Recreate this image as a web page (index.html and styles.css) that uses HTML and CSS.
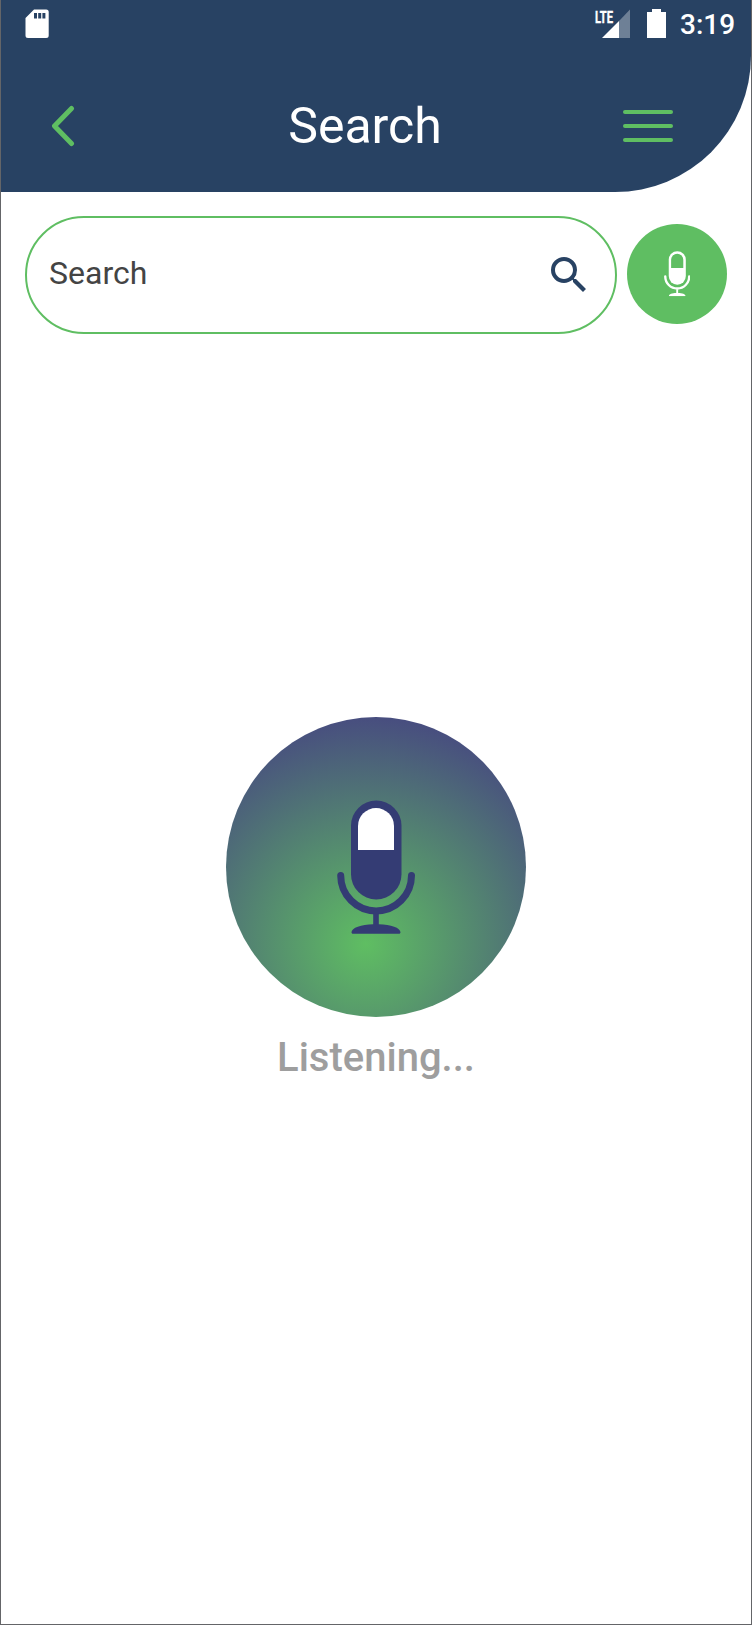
FILE: index.html
```
<!DOCTYPE html>
<html lang="en">
<head>
  <meta charset="UTF-8" />
  <title>Search</title>
  <meta name="viewport" content="width=device-width, initial-scale=1.0" />
  <link rel="stylesheet" href="styles.css">
</head>
<body>
  <!-- Shared microphone shape -->
  <svg class="defs" width="0" height="0" aria-hidden="true">
    <symbol id="mic" viewBox="111 83 78 134">
      <rect x="125" y="83.5" width="50.5" height="99" rx="25.2" fill="currentColor" />
      <path class="mic-window" d="M132 133V109a18 18 0 0 1 36 0v24z" />
      <path d="M114.7 158.5a35.4 35.4 0 0 0 70.8 0" fill="none" stroke="currentColor" stroke-width="7" stroke-linecap="round" />
      <path d="M147.2 196h5.6v11.3c12 .2 21.7 3.6 21.7 8 0 .9-.6 1.5-1.5 1.5h-46c-.9 0-1.5-.6-1.5-1.5 0-4.4 9.7-7.8 21.7-8z" fill="currentColor" />
    </symbol>
  </svg>

  <div class="screen">
    <header>
      <div class="status-bar">
        <svg class="sd-card" width="24" height="30" viewBox="0 0 24 30">
          <path fill="#fff" fill-rule="evenodd" d="M9 .5h12.2a2.5 2.5 0 0 1 2.5 2.5v23.5a2.5 2.5 0 0 1-2.5 2.5H3a2.500 2.500 0 0 1-2.500-2.500V9zM9 4v5.500h3V4zm4.200 0v5.500h3V4zm4.200 0v5.500h3V4z" />
        </svg>
        <div class="status-right">
          <svg class="signal" width="36" height="30" viewBox="0 0 36 30">
            <path fill="#fff" fill-opacity=".33" d="M24 12l11-11.5V29H24z" />
            <path fill="#fff" d="M7 29L24 12v17z" />
            <text class="lte" x="0" y="13.6" textLength="18" lengthAdjust="spacingAndGlyphs">LTE</text>
          </svg>
          <svg class="battery" width="19" height="29" viewBox="0 0 19 29">
            <path fill="#fff" d="M5 0h9v3h5v26H0V3h5z" />
          </svg>
          <span class="time">3:19</span>
        </div>
      </div>

      <div class="title-bar">
        <svg class="back" width="24" height="42" viewBox="0 0 24 42">
          <path d="M20.5 3.5L3.5 21l17 17.500" />
        </svg>
        <h1>Search</h1>
        <div class="menu">
          <span></span>
          <span></span>
          <span></span>
        </div>
      </div>
    </header>

    <div class="search-row">
      <div class="search-box">
        <span class="search-text">Search</span>
        <svg class="search-icon" width="48" height="48" viewBox="0 0 24 24">
          <path d="M15.5 14h-.79l-.28-.27A6.471 6.471 0 0 0 16 9.5 6.5 6.5 0 1 0 9.5 16c1.61 0 3.09-.59 4.23-1.57l.27.28v.79l5 4.99L20.49 19l-4.99-5zm-6 0C7.01 14 5 11.99 5 9.5S7.01 5 9.5 5 14 7.01 14 9.5 11.99 14 9.5 14z" />
        </svg>
      </div>
      <div class="mic-button">
        <svg width="26.4" height="45.3"><use href="#mic" /></svg>
      </div>
    </div>

    <main>
      <div class="listening-circle">
        <svg width="78" height="134"><use href="#mic" /></svg>
      </div>
      <p class="listening-text">Listening...</p>
    </main>
  </div>
</body>
</html>
```
FILE: styles.css
```
* {
  box-sizing: border-box;
}

body {
  margin: 0;
  font-family: Roboto, sans-serif;
  background: #fff;
}

.defs {
  display: block;
}

.screen {
  width: 752px;
  height: 1625px;
  border: 1px solid #646568;
  border-top: none;
  overflow: hidden;
}

/* Header */
header {
  height: 192px;
  background: #284263;
  border-bottom-right-radius: 136px;
}

.status-bar {
  display: flex;
  justify-content: space-between;
  align-items: flex-start;
  height: 60px;
  padding: 9px 16px 0 24px;
}

.status-right {
  display: flex;
  align-items: flex-start;
}

.signal {
  overflow: visible;
}

.battery {
  margin-left: 16px;
}

.lte {
  font-size: 17px;
  font-weight: 700;
  fill: #fff;
  stroke: #fff;
  stroke-width: 0.4;
}

.time {
  width: 55px;
  margin-left: 14px;
  color: #fff;
  font-size: 28px;
  font-weight: 500;
  line-height: 32px;
  white-space: nowrap;
}

.title-bar {
  display: flex;
  justify-content: space-between;
  align-items: center;
  height: 132px;
  padding: 0 78px 0 50px;
}

.back {
  fill: none;
  stroke: #5fbe62;
  stroke-width: 5;
  stroke-linecap: round;
  stroke-linejoin: round;
}

h1 {
  flex: 1;
  margin: 0 0 0 32px;
  color: #fff;
  font-size: 50px;
  font-weight: 400;
  text-align: center;
}

.menu {
  display: flex;
  flex-direction: column;
  gap: 10px;
  width: 50px;
}

.menu span {
  height: 4px;
  border-radius: 2px;
  background: #5fbe62;
}

/* Search field and mic button */
.search-row {
  display: flex;
  align-items: center;
  gap: 10px;
  padding: 24px 24px 0;
}

.search-box {
  display: flex;
  flex: 1;
  justify-content: space-between;
  height: 118px;
  padding: 33px 22px 0;
  border: 2px solid #5fbe62;
  border-radius: 59px;
}

.search-text {
  color: #444;
  font-size: 32px;
  line-height: 44px;
}

.search-icon {
  fill: #284263;
}

.mic-button {
  display: flex;
  justify-content: center;
  align-items: center;
  width: 100px;
  height: 100px;
  margin-bottom: 2px;
  border-radius: 50%;
  color: #fff;
  background: #5fbe62;
}

.mic-window {
  fill: var(--window, #5fbe62);
}

/* Listening indicator */
main {
  display: flex;
  flex-direction: column;
  align-items: center;
  padding-top: 383px;
}

.listening-circle {
  --window: #fff;
  display: flex;
  justify-content: center;
  align-items: center;
  width: 300px;
  height: 300px;
  border-radius: 50%;
  color: #343c74;
  background: radial-gradient(circle 234px at 140px 227px, #5fbe62, #474a80);
}

.listening-text {
  margin: 16px 0 0;
  color: #9e9e9e;
  font-size: 40px;
  font-weight: 500;
  line-height: 49px;
}
```
